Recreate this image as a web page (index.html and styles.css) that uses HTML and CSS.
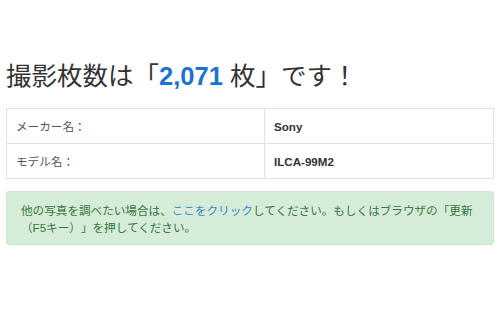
FILE: index.html
```html
<!DOCTYPE HTML>
<html>

<head>
    <title>撮影枚数</title>
    <meta name="viewport" content="width=device-width, initial-scale=1">
    <link rel="stylesheet" href="styles.css">
</head>

<body>
    <div class="container">
        <h1 class="count">撮影枚数は「<span class="num">2,071</span> 枚」です！</h1>
        <table class="info">
            <tr>
                <td class="label">メーカー名：</td>
                <td class="value">Sony</td>
            </tr>
            <tr>
                <td class="label">モデル名：</td>
                <td class="value">ILCA-99M2</td>
            </tr>
        </table>
        <div class="alert">
            他の写真を調べたい場合は、<a href="#" class="link">ここをクリック</a>してください。もしくはブラウザの「更新<br>（F5キー）」を押してください。
        </div>
    </div>
</body>

</html>
```

FILE: styles.css
```css
html {
    font-family: "Liberation Sans", "Noto Sans CJK JP", sans-serif;
    color: #333;
    text-spacing-trim: space-all;
}

body {
    margin: 0;
    background-color: #fff;
}

.container {
    padding: 61px 6px 0;
}

.count {
    margin: 0;
    font-size: 25.5px;
    line-height: 30px;
    font-weight: normal;
    color: #333;
}

.num {
    font-weight: bold;
    color: #1a73d1;
}

.info {
    width: 100%;
    margin-top: 17px;
    border-collapse: collapse;
    border: 1px solid #e2e2e2;
}

.info td {
    padding: 9px 9px 8px;
    font-size: 11.6px;
    line-height: 17px;
    border: 1px solid #e2e2e2;
}

.label {
    width: 239px;
    color: #555;
}

.value {
    font-weight: bold;
    color: #333;
}

.alert {
    margin-top: 12px;
    padding: 10px 14px 8px;
    font-size: 11.6px;
    line-height: 17px;
    color: #3c763d;
    background-color: #d5ecd9;
    border: 1px solid #cde6d0;
    border-radius: 3px;
}

.link {
    color: #3a87cf;
    text-decoration: none;
}
```
